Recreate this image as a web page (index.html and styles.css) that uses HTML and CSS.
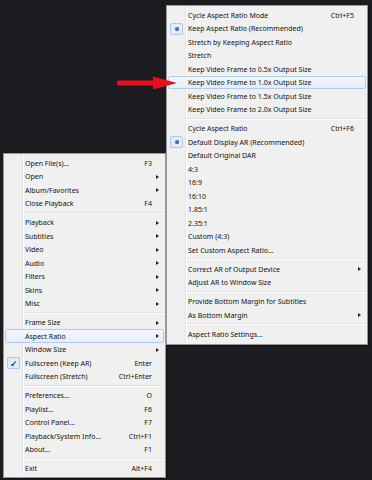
FILE: index.html
```html
<!DOCTYPE html>
<html lang="en">
<head>
  <meta charset="UTF-8" />
  <title>Aspect Ratio Menu</title>
  <link rel="stylesheet" href="styles.css">
</head>
<body>
  <div class="desk">

    <!-- main context menu -->
    <div class="menu menu-main">
      <div class="item"><span class="mark"></span><span class="label">Open File(s)...</span><span class="key">F3</span><span class="sub"></span></div>
      <div class="item"><span class="mark"></span><span class="label">Open</span><span class="key"></span><span class="sub arrow"></span></div>
      <div class="item"><span class="mark"></span><span class="label">Album/Favorites</span><span class="key"></span><span class="sub arrow"></span></div>
      <div class="item"><span class="mark"></span><span class="label">Close Playback</span><span class="key">F4</span><span class="sub"></span></div>
      <div class="sep"></div>
      <div class="item"><span class="mark"></span><span class="label">Playback</span><span class="key"></span><span class="sub arrow"></span></div>
      <div class="item"><span class="mark"></span><span class="label">Subtitles</span><span class="key"></span><span class="sub arrow"></span></div>
      <div class="item"><span class="mark"></span><span class="label">Video</span><span class="key"></span><span class="sub arrow"></span></div>
      <div class="item"><span class="mark"></span><span class="label">Audio</span><span class="key"></span><span class="sub arrow"></span></div>
      <div class="item"><span class="mark"></span><span class="label">Filters</span><span class="key"></span><span class="sub arrow"></span></div>
      <div class="item"><span class="mark"></span><span class="label">Skins</span><span class="key"></span><span class="sub arrow"></span></div>
      <div class="item"><span class="mark"></span><span class="label">Misc</span><span class="key"></span><span class="sub arrow"></span></div>
      <div class="sep"></div>
      <div class="item"><span class="mark"></span><span class="label">Frame Size</span><span class="key"></span><span class="sub arrow"></span></div>
      <div class="item active"><span class="mark"></span><span class="label">Aspect Ratio</span><span class="key"></span><span class="sub arrow"></span></div>
      <div class="item"><span class="mark"></span><span class="label">Window Size</span><span class="key"></span><span class="sub arrow"></span></div>
      <div class="item"><span class="mark check">&#10003;</span><span class="label">Fullscreen (Keep AR)</span><span class="key">Enter</span><span class="sub"></span></div>
      <div class="item"><span class="mark"></span><span class="label">Fullscreen (Stretch)</span><span class="key">Ctrl+Enter</span><span class="sub"></span></div>
      <div class="sep"></div>
      <div class="item"><span class="mark"></span><span class="label">Preferences...</span><span class="key">O</span><span class="sub"></span></div>
      <div class="item"><span class="mark"></span><span class="label">Playlist...</span><span class="key">F6</span><span class="sub"></span></div>
      <div class="item"><span class="mark"></span><span class="label">Control Panel...</span><span class="key">F7</span><span class="sub"></span></div>
      <div class="item"><span class="mark"></span><span class="label">Playback/System Info...</span><span class="key">Ctrl+F1</span><span class="sub"></span></div>
      <div class="item"><span class="mark"></span><span class="label">About...</span><span class="key">F1</span><span class="sub"></span></div>
      <div class="sep"></div>
      <div class="item"><span class="mark"></span><span class="label">Exit</span><span class="key">Alt+F4</span><span class="sub"></span></div>
    </div>

    <!-- aspect ratio submenu -->
    <div class="menu menu-ar">
      <div class="item"><span class="mark"></span><span class="label">Cycle Aspect Ratio Mode</span><span class="key">Ctrl+F5</span><span class="sub"></span></div>
      <div class="item"><span class="mark radio"></span><span class="label">Keep Aspect Ratio (Recommended)</span><span class="key"></span><span class="sub"></span></div>
      <div class="item"><span class="mark"></span><span class="label">Stretch by Keeping Aspect Ratio</span><span class="key"></span><span class="sub"></span></div>
      <div class="item"><span class="mark"></span><span class="label">Stretch</span><span class="key"></span><span class="sub"></span></div>
      <div class="item"><span class="mark"></span><span class="label">Keep Video Frame to 0.5x Output Size</span><span class="key"></span><span class="sub"></span></div>
      <div class="item active"><span class="mark"></span><span class="label">Keep Video Frame to 1.0x Output Size</span><span class="key"></span><span class="sub"></span></div>
      <div class="item"><span class="mark"></span><span class="label">Keep Video Frame to 1.5x Output Size</span><span class="key"></span><span class="sub"></span></div>
      <div class="item"><span class="mark"></span><span class="label">Keep Video Frame to 2.0x Output Size</span><span class="key"></span><span class="sub"></span></div>
      <div class="sep"></div>
      <div class="item"><span class="mark"></span><span class="label">Cycle Aspect Ratio</span><span class="key">Ctrl+F6</span><span class="sub"></span></div>
      <div class="item"><span class="mark radio"></span><span class="label">Default Display AR (Recommended)</span><span class="key"></span><span class="sub"></span></div>
      <div class="item"><span class="mark"></span><span class="label">Default Original DAR</span><span class="key"></span><span class="sub"></span></div>
      <div class="item"><span class="mark"></span><span class="label">4:3</span><span class="key"></span><span class="sub"></span></div>
      <div class="item"><span class="mark"></span><span class="label">16:9</span><span class="key"></span><span class="sub"></span></div>
      <div class="item"><span class="mark"></span><span class="label">16:10</span><span class="key"></span><span class="sub"></span></div>
      <div class="item"><span class="mark"></span><span class="label">1.85:1</span><span class="key"></span><span class="sub"></span></div>
      <div class="item"><span class="mark"></span><span class="label">2.35:1</span><span class="key"></span><span class="sub"></span></div>
      <div class="item"><span class="mark"></span><span class="label">Custom (4:3)</span><span class="key"></span><span class="sub"></span></div>
      <div class="item"><span class="mark"></span><span class="label">Set Custom Aspect Ratio...</span><span class="key"></span><span class="sub"></span></div>
      <div class="sep"></div>
      <div class="item"><span class="mark"></span><span class="label">Correct AR of Output Device</span><span class="key"></span><span class="sub arrow"></span></div>
      <div class="item"><span class="mark"></span><span class="label">Adjust AR to Window Size</span><span class="key"></span><span class="sub"></span></div>
      <div class="sep"></div>
      <div class="item"><span class="mark"></span><span class="label">Provide Bottom Margin for Subtitles</span><span class="key"></span><span class="sub"></span></div>
      <div class="item"><span class="mark"></span><span class="label">As Bottom Margin</span><span class="key"></span><span class="sub arrow"></span></div>
      <div class="sep"></div>
      <div class="item"><span class="mark"></span><span class="label">Aspect Ratio Settings...</span><span class="key"></span><span class="sub"></span></div>
    </div>

    <!-- red pointer arrow -->
    <svg class="pointer" width="62" height="16" viewBox="0 0 62 16">
      <path d="M2 4.5 H36 V0.5 L60 7 L36 13.5 V9.5 H2 A2.5 2.5 0 0 1 2 4.5 Z" fill="#e8101a"/>
    </svg>
  </div>
</body>
</html>
```

FILE: styles.css
```css
html, body {
  margin: 0;
  padding: 0;
  background: #1c1b20;
}

.desk {
  position: relative;
  width: 372px;
  height: 480px;
  overflow: hidden;
  font-family: "Noto Sans", "Open Sans", Arial, sans-serif;
  font-size: 7px;
  color: #111;
}

.menu {
  position: absolute;
  box-sizing: border-box;
  padding: 2px 1px;
  background: #f0f0f0;
  border: 1px solid #979797;
  box-shadow: 1px 1px 1px rgba(0,0,0,0.35);
  display: flex;
  flex-direction: column;
}

/* the vertical gutter line */
.menu::before {
  content: "";
  position: absolute;
  top: 1px;
  bottom: 1px;
  left: 18px;
  width: 1px;
  background: #e2e3e3;
  border-right: 1px solid #fff;
}

.menu-main {
  left: 3px;
  top: 153px;
  width: 163px;
  height: 325px;
}

.menu-ar {
  left: 166px;
  top: 5px;
  width: 202px;
  height: 340px;
}

.item {
  position: relative;
  z-index: 1;
  height: 13.5px;
  display: grid;
  grid-template-columns: 18px 1fr auto 11px;
  align-items: center;
  box-sizing: border-box;
  border: 1px solid transparent;
  border-radius: 2px;
  white-space: nowrap;
}

.item.active {
  border-color: #aeccf1;
  background: linear-gradient(#f4f8fd, #e3edfa);
}

.mark {
  height: 12px;
  margin-left: 1px;
  box-sizing: border-box;
  display: flex;
  align-items: center;
  justify-content: center;
}

.mark.radio,
.mark.check {
  width: 13px;
  border: 1px solid #a9c8ee;
  border-radius: 2px;
  background: #e2ecf9;
}

.mark.radio::after {
  content: "";
  width: 4px;
  height: 4px;
  border-radius: 50%;
  background: radial-gradient(circle at 40% 35%, #6a7ad0, #1d2b86);
}

.mark.check {
  color: #1d3a9a;
  font-size: 9px;
  font-weight: bold;
}

.label {
  padding-left: 1px;
}

.key {
  text-align: right;
  padding-left: 10px;
}

.sub.arrow {
  display: flex;
  justify-content: center;
}

.sub.arrow::after {
  content: "";
  border-left: 3px solid #222;
  border-top: 2.5px solid transparent;
  border-bottom: 2.5px solid transparent;
}

.sep {
  height: 5.5px;
  display: flex;
  align-items: center;
  padding-left: 19px;
}

.sep::after {
  content: "";
  flex: 1;
  height: 1px;
  background: #e0e0e0;
  border-bottom: 1px solid #fff;
}

.pointer {
  position: absolute;
  left: 117px;
  top: 76px;
  z-index: 5;
}
```
